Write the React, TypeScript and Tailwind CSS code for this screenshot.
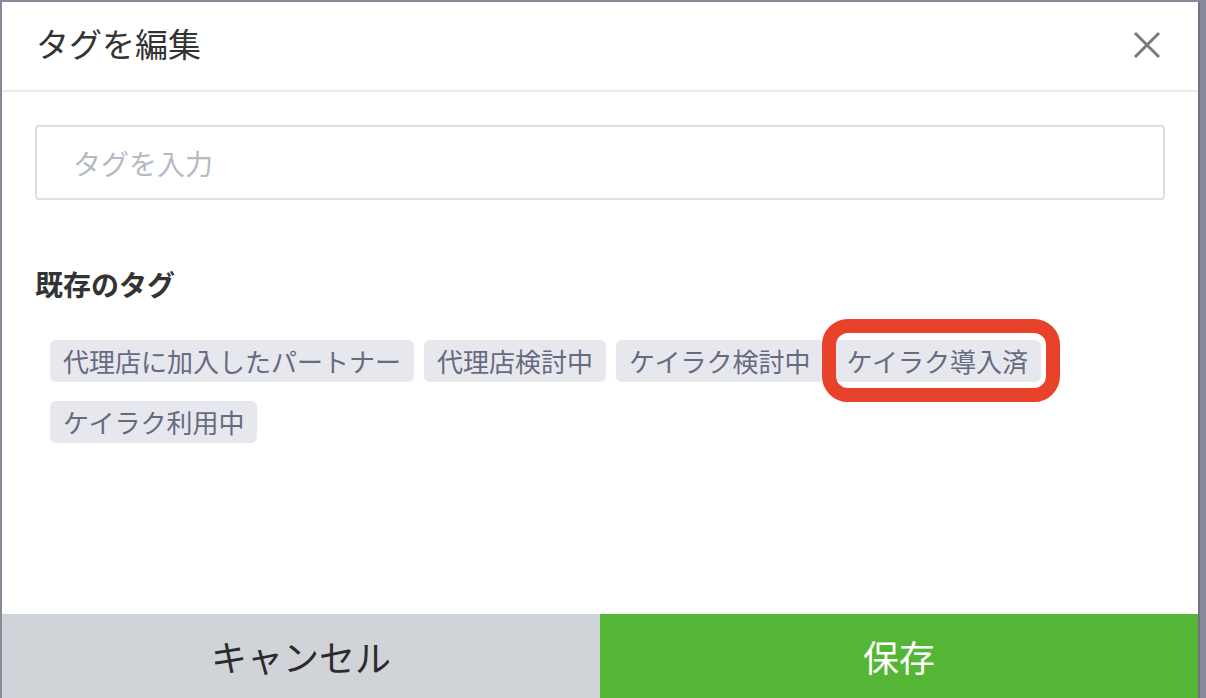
import React from 'react';

export default function App() {
  const tags = ['代理店に加入したパートナー', '代理店検討中', 'ケイラク検討中', 'ケイラク導入済', 'ケイラク利用中'];

  return (
    <div
      className="relative w-[1206px] h-[698px] overflow-hidden bg-[#868a99] pl-[2px] pt-[2px]"
      style={{ fontFamily: '"Noto Sans CJK JP", "Noto Sans", sans-serif' }}
    >
      <div className="w-[1196px] h-[696px] bg-white flex flex-col border-r-2 border-[#6f7382] box-content">
        {/* Header */}
        <div className="h-[90px] shrink-0 border-b-2 border-[#ebebeb] flex items-center justify-between pl-[34px] pr-[37px]">
          <h1 className="text-[33px] text-[#333333] leading-none pb-[5px]">タグを編集</h1>
          <svg width="28" height="28" viewBox="0 0 28 28" className="mb-[2px]">
            <path d="M2 2 L26 26 M26 2 L2 26" stroke="#7a7a7a" strokeWidth="3" />
          </svg>
        </div>

        {/* Body */}
        <div className="flex-1 px-[33px] pt-[33px]">
          <div className="h-[75px] border-2 border-[#dcdfe4] rounded-[4px] flex items-center pl-[36px]">
            <span className="text-[28px] text-[#b5bac2]">タグを入力</span>
          </div>

          <h2 className="mt-[64px] text-[28px] font-bold text-[#333333] leading-[40px]">既存のタグ</h2>

          <div className="mt-[36px] pl-[15px] flex flex-wrap gap-x-[10px] gap-y-[19px] w-[1020px]">
            {tags.map((tag) => (
              <span
                key={tag}
                className="h-[42px] px-[13px] rounded-[6px] bg-[#e7e8ed] text-[26px] leading-[42px] text-[#666b80]"
              >
                {tag}
              </span>
            ))}
          </div>
        </div>

        {/* Footer */}
        <div className="h-[84px] shrink-0 flex">
          <button className="w-[598px] bg-[#d0d3d8] text-[36px] text-[#2b2b2b]">キャンセル</button>
          <button className="flex-1 bg-[#55b636] text-[36px] text-white">保存</button>
        </div>
      </div>

      {/* Red highlight annotation */}
      <div className="absolute left-[822px] top-[319px] w-[238px] h-[83px] border-[14px] border-[#e8432a] rounded-[26px]" />
    </div>
  );
}
